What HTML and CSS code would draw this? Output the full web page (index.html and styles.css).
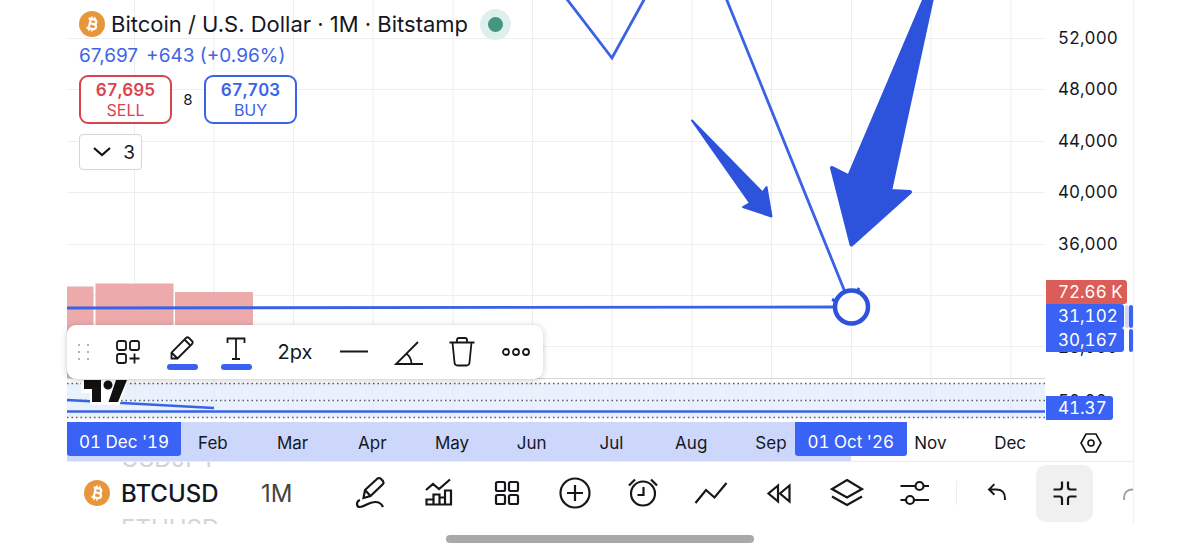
FILE: index.html
```
<!DOCTYPE html>
<html lang="en">
<head>
  <meta charset="UTF-8">
  <meta name="viewport" content="width=device-width, initial-scale=1">
  <title>BTCUSD Chart</title>
  <link rel="stylesheet" href="styles.css">
</head>
<body>
  <!-- shared icons -->
  <svg class="defs" width="0" height="0" aria-hidden="true">
    <symbol id="coin" viewBox="0 0 26 26">
      <circle cx="13" cy="13" r="13" fill="#e8963c"/>
      <g transform="rotate(13 13 13)" fill="none" stroke="#fff" stroke-width="2.2">
        <path d="M8.500 8.300h5.700c3.400 0 3.400 4.400 0 4.400h-3.400M8.500 17.700h6.200c3.800 0 3.800-5 0-5h-3.500M10.700 8.300v9.400"/>
        <path d="M11.400 5.500v3M14.400 5.500v3M11.400 17.500v3M14.400 17.500v3" stroke-width="1.500"/>
      </g>
    </symbol>
  </svg>

  <main class="app">
    <section class="chart">
      <div class="plot">
        <svg class="plot-svg" viewBox="0 0 978 421" preserveAspectRatio="xMinYMin slice">
          <rect y="383" width="978" height="35" fill="#e8f1fc"/>
          <g stroke="#e9eaec" stroke-opacity=".8">
            <path d="M67.500 0v421M147 0v421M226.500 0v421M306 0v421M386 0v421M465.500 0v421M545 0v421M625 0v421M704.500 0v421M784.500 0v421M864 0v421M944 0v421"/>
            <path d="M0 38.500h978M0 89.500h978M0 141.500h978M0 192.500h978M0 244.500h978M0 295.500h978M0 346.500h978"/>
          </g>
          <!-- volume -->
          <path d="M0 286.500h26.500V378H0zM28.500 283.500h78V378h-78zM108 292h78v86h-78z" fill="#ecabaa"/>
          <path d="M0 378.500h978" stroke="#d5d7db"/>
          <!-- oscillator pane -->
          <path d="M0 383.500h978M0 400.500h978M0 417.500h978" stroke="#5c606b" stroke-width="1.300" stroke-dasharray="1.500 3"/>
          <path d="M0 400L147 408M0 411.500H978" fill="none" stroke="#3a62e4" stroke-width="2.600"/>
          <path d="M14 375h49L52.500 405H23v-12H14z" fill="#fff"/>
          <path d="M17 380h17v22h-9v-13h-8zM49 380h11l-9 22h-9.500zM36.500 385a4.500 4.500 0 1 0 9 0a4.500 4.500 0 1 0-9 0" fill="#111"/>
          <!-- drawings -->
          <g fill="none" stroke="#3a62e4" stroke-width="2.800">
            <path d="M499-2L545 58L578-2M659-2L778 292M0 308L768 307"/>
          </g>
          <path d="M858-2L782 176.500L765 168L784.500 244.500L843 192L823 191L865-2z" fill="#2d53dc" stroke="#2d53dc" stroke-width="4" stroke-linejoin="round"/>
          <path d="M625 120.500L695.500 192.500L699.500 187L704.500 216.500L676 207L683 203z" fill="#2d53dc" stroke="#2d53dc" stroke-width="2" stroke-linejoin="round"/>
          <path d="M765 299.500l5 2M792 288l-2 4" stroke="#2d53dc" stroke-width="3"/>
          <circle cx="784.500" cy="307" r="16.500" fill="#fff" stroke="#2d53dc" stroke-width="4.500"/>
        </svg>

        <header class="legend">
          <h1 class="legend-title">
            <svg class="coin"><use href="#coin"/></svg>
            Bitcoin / U.S. Dollar · 1M · Bitstamp
            <span class="market-open"></span>
          </h1>
          <p class="legend-price"><span>67,697</span><span>+643 (+0.96%)</span></p>
          <div class="trade">
            <button class="trade-btn sell"><b>67,695</b>SELL</button>
            <span class="spread">8</span>
            <button class="trade-btn buy"><b>67,703</b>BUY</button>
          </div>
          <button class="indicators">
            <svg width="18" height="10" viewBox="0 0 18 10" fill="none" stroke="#111" stroke-width="2.200"><path d="M1 1l8 7 8-7"/></svg>
            3
          </button>
        </header>

        <div class="draw-bar">
          <svg class="grip" width="14" height="18" viewBox="0 0 14 18" fill="#b4b4b4"><path d="M1 1h2v2H1zM10 1h2v2h-2zM1 8h2v2H1zM10 8h2v2h-2zM1 15h2v2H1zM10 15h2v2h-2z"/></svg>
          <button class="draw-btn" aria-label="Templates">
            <svg width="26" height="26" viewBox="0 0 26 26"><rect x="2" y="2" width="9" height="9" rx="2"/><rect x="15" y="2" width="9" height="9" rx="2"/><rect x="2" y="15" width="9" height="9" rx="2"/><path d="M19.500 14.500v10M14.500 19.500h10"/></svg>
          </button>
          <button class="draw-btn with-color" aria-label="Line color">
            <svg width="26" height="26" viewBox="0 0 26 26"><path d="M2.500 23.500v-6L17 3q1.500-1.500 3 0l3 3q1.500 1.500 0 3L8.500 23.500zM15.500 4.500l6 6M2.500 17.500l6 6"/></svg>
          </button>
          <button class="draw-btn with-color" aria-label="Text color">
            <svg width="26" height="26" viewBox="0 0 26 26"><path d="M4.500 8V3.500h17V8M13 3.500V24M9 24h8"/></svg>
          </button>
          <button class="draw-btn line-width">2px</button>
          <button class="draw-btn" aria-label="Line style">
            <svg width="30" height="26" viewBox="0 0 30 26"><path d="M1 12.500h28" stroke-width="2"/></svg>
          </button>
          <button class="draw-btn" aria-label="Angle">
            <svg width="30" height="30" viewBox="0 0 30 30"><path d="M25 5L3 27h27M13 16.500Q18.500 20 18.500 27"/></svg>
          </button>
          <button class="draw-btn" aria-label="Remove">
            <svg width="28" height="30" viewBox="0 0 28 30"><path d="M1.500 5.500h25M4.500 5.500l2 20q.3 3 3 3h9q2.700 0 3-3l2-20M9 5.500V3q0-2 2-2h6q2 0 2 2v2.500"/></svg>
          </button>
          <button class="draw-btn" aria-label="More">
            <svg width="30" height="10" viewBox="0 0 30 10"><circle cx="5" cy="5" r="3"/><circle cx="15" cy="5" r="3"/><circle cx="25" cy="5" r="3"/></svg>
          </button>
        </div>
      </div>

      <aside class="scale">
        <div class="scale-labels">
          <span>52,000</span>
          <span>48,000</span>
          <span>44,000</span>
          <span>40,000</span>
          <span>36,000</span>
          <span>32,000</span>
          <span>28,000</span>
        </div>
        <span class="osc-label">50.00</span>
        <div class="price-tags">
          <span class="tag tag-volume">72.66 K</span>
          <span class="tag">31,102</span>
          <span class="tag">30,167</span>
        </div>
        <div class="range-marks"><i></i><i></i></div>
        <span class="tag tag-osc">41.37</span>
      </aside>
    </section>

    <div class="time-axis">
      <span class="date-tag date-start">01 Dec '19</span>
      <span>Feb</span>
      <span>Mar</span>
      <span>Apr</span>
      <span>May</span>
      <span>Jun</span>
      <span>Jul</span>
      <span>Aug</span>
      <span>Sep</span>
      <span class="date-tag">01 Oct '26</span>
      <span>Nov</span>
      <span>Dec</span>
      <button class="axis-settings" aria-label="Axis settings">
        <svg width="22" height="20" viewBox="0 0 22 20" fill="none" stroke="#111" stroke-width="1.600"><path d="M6 1h10l5 9-5 9H6l-5-9z"/><circle cx="11" cy="10" r="3"/></svg>
      </button>
    </div>

    <nav class="toolbar">
      <svg class="coin"><use href="#coin"/></svg>
      <div class="symbols">
        <button class="symbol-near">USDJPY</button>
        <button>BTCUSD</button>
        <button class="symbol-near">ETHUSD</button>
      </div>
      <button class="interval">1M</button>
      <div class="tools">
        <button class="tool" aria-label="Draw">
          <svg viewBox="0 0 34 34"><path d="M9.500 22l1.500-8L23.500 2.500q1.500-1 3 0l2.500 2.500q1 1.500 0 3L16.500 20zM11 14l5.500 6M6 24c-4 1-4 7 0 7c5 0 8-5 15-5q6 0 8 5"/></svg>
        </button>
        <button class="tool" aria-label="Indicators">
          <svg viewBox="0 0 34 34"><path d="M4 14l7-6 6 5L28 3.500M4.500 28.500v-5h7v-5h6v3h5.500v-7h6v14zM11.500 23.500v5M17.500 21.500v7M23 21.500v7"/></svg>
        </button>
        <button class="tool" aria-label="Layouts">
          <svg viewBox="0 0 34 34"><rect x="6" y="6" width="9" height="9" rx="1.500"/><rect x="19" y="6" width="9" height="9" rx="1.500"/><rect x="6" y="19" width="9" height="9" rx="1.500"/><rect x="19" y="19" width="9" height="9" rx="1.500"/></svg>
        </button>
        <button class="tool" aria-label="Add">
          <svg viewBox="0 0 34 34"><circle cx="17" cy="17" r="14.500"/><path d="M17 9v16M9 17h16"/></svg>
        </button>
        <button class="tool" aria-label="Alert">
          <svg viewBox="0 0 34 34"><circle cx="17" cy="17.500" r="12"/><path d="M17.500 11v8h-6M3 9.500l6-6M25 3.500l6 6"/></svg>
        </button>
        <button class="tool" aria-label="Trend">
          <svg viewBox="0 0 34 34"><path d="M1.500 27L12 14l8.500 7.500L32.500 7"/></svg>
        </button>
        <button class="tool" aria-label="Replay">
          <svg viewBox="0 0 34 34"><path d="M16 9.500v16L6.500 17.500zM27.500 9.500v16L18 17.500z"/></svg>
        </button>
        <button class="tool" aria-label="Object tree">
          <svg viewBox="0 0 34 34"><path d="M17 4l15 9-15 8.500L2 13zM2 20.500l15 8.500 15-8.500"/></svg>
        </button>
        <button class="tool" aria-label="Settings">
          <svg viewBox="0 0 34 34"><path d="M2.500 10h15M25.500 10H31M2.500 24H8M16 24h15"/><circle cx="21.500" cy="10" r="4"/><circle cx="12" cy="24" r="4"/></svg>
        </button>
      </div>
      <button class="tool undo" aria-label="Undo">
        <svg viewBox="0 0 34 34"><path d="M14 7L8 13l6 6M8 13h8q10 0 10 10v2"/></svg>
      </button>
      <button class="tool active" aria-label="Exit fullscreen">
        <svg viewBox="0 0 34 34"><path d="M14 5.500V11q0 2.500-2.500 2.500H5.500M20 5.500V11q0 2.500 2.500 2.500h6M5.500 20.500h6q2.500 0 2.500 2.500v6M28.500 20.500h-6q-2.500 0-2.500 2.500v6"/></svg>
      </button>
      <button class="tool redo" aria-label="Redo">
        <svg viewBox="0 0 34 34"><path d="M20 7l6 6-6 6M26 13h-8Q8 13 8 23v2"/></svg>
      </button>
    </nav>
  </main>
  <div class="home-indicator"></div>
</body>
</html>
```
FILE: styles.css
```
* { box-sizing: border-box; }
body { margin: 0; background: #fff; color: #15171f; font-family: Inter, "Liberation Sans", sans-serif; font-size: 17px; overflow: hidden; }
button { padding: 0; border: 0; background: none; color: inherit; font: inherit; cursor: pointer; }
svg { display: block; }
.defs { position: absolute; }
.app { margin: 0 66px 0 67px; border-right: 1px solid #f1f1f3; }
.coin { width: 26px; height: 26px; flex: none; }

/* chart */
.chart { display: grid; grid-template-columns: minmax(0, 1fr) 88px; height: 421px; }
.plot { position: relative; }
.plot-svg { width: 100%; height: 100%; }

.legend { position: absolute; top: 8px; left: 12px; }
.legend-title { display: flex; align-items: center; gap: 6px; margin: 0; height: 32px; font-size: 22px; font-weight: 400; white-space: nowrap; }
.market-open { width: 31px; height: 31px; margin-left: 6px; border: 8px solid #dfefec; border-radius: 50%; background: #43967f; }
.legend-price { display: flex; gap: 8px; margin: 4px 0 7px; font-size: 19px; line-height: 24px; color: #3f65e5; }
.trade { display: flex; align-items: center; }
.trade-btn { width: 93px; height: 49px; border: 2px solid; border-radius: 9px; background: #fff; font-size: 16px; line-height: 20px; }
.trade-btn b { display: block; font-size: 17px; font-weight: 600; font-variant-numeric: tabular-nums; }
.sell { color: #d9434d; }
.buy { color: #3a62e8; }
.spread { width: 32px; text-align: center; font-size: 15px; }
.indicators { display: flex; align-items: center; justify-content: flex-end; gap: 12px; width: 63px; height: 36px; margin-top: 10px; padding-right: 6px; border: 1px solid #d6d6d6; border-radius: 4px; background: #fff; font-size: 19px; }

/* floating drawing toolbar */
.draw-bar { position: absolute; top: 325px; left: 0; display: flex; align-items: center; height: 54px; border-radius: 9px; background: #fff; box-shadow: 0 1px 6px rgba(0, 0, 0, .22); }
.grip { margin: 0 10px; }
.draw-btn { display: flex; flex-direction: column; align-items: center; justify-content: center; width: 54px; height: 54px; }
.draw-btn svg { fill: none; stroke: #15171a; stroke-width: 1.8; }
.with-color::after { content: ""; width: 31px; height: 6px; margin-top: 3px; border-radius: 3px; background: #3a62f2; }
.line-width { width: 64px; font-size: 20px; }

/* price scale */
.scale { position: relative; font-variant-numeric: tabular-nums; }
.scale-labels { display: grid; grid-template-rows: repeat(7, 1fr); height: 361px; margin-top: 12px; padding-left: 13px; align-items: center; }
.price-tags { position: absolute; top: 280px; left: 1px; }
.tag { display: block; width: 78px; height: 24px; padding-left: 12px; border-radius: 0 3px 3px 0; background: #3a62f4; color: #fff; line-height: 24px; white-space: nowrap; }
.tag-volume { width: 81px; background: #dc5d57; }
.osc-label { position: absolute; top: 391px; left: 13px; }
.tag-osc { position: absolute; top: 396px; left: 1px; width: 67px; }
.range-marks { position: absolute; top: 305px; right: 0; display: grid; gap: 1px; }
.range-marks i { width: 4px; height: 23px; border-radius: 3px; background: #3a62f4; }
.range-marks i:first-child { box-shadow: -4px 0 #cdd8fb; }

/* time axis */
.time-axis { display: grid; grid-template-columns: 106px repeat(11, minmax(0, 1fr)) 83px; align-items: center; height: 41px; padding-top: 3px; border-bottom: 1px solid #ededf0; background: linear-gradient(to right, #ccd7fb 73.5%, #fff 73.5%) 0 1px no-repeat; text-align: center; }
.date-tag { align-self: start; justify-self: center; width: 112px; height: 34px; margin-top: -2px; border-radius: 0 0 3px 3px; background: #3a62f4; color: #fff; font-variant-numeric: tabular-nums; line-height: 41px; white-space: nowrap; }
.date-start { justify-self: start; width: 114px; }
.axis-settings { justify-self: center; }

/* bottom toolbar */
.toolbar { display: flex; align-items: center; height: 62px; padding-left: 17px; overflow: hidden; }
.symbols { display: flex; flex-direction: column; width: 140px; padding-left: 11px; font-size: 24px; line-height: 35px; font-weight: 500; }
.symbols button { text-align: left; }
.symbols .symbol-near { color: #d4d4d4; font-weight: 400; }
.interval { width: 87px; padding-left: 11px; text-align: left; font-size: 24px; color: #444; }
.tools { display: flex; flex: 1; background: linear-gradient(#ededf0, #ededf0) right center / 1px 24px no-repeat; }
.tool { display: grid; place-items: center; flex: none; width: 68px; height: 34px; }
.tool svg { width: 34px; height: 34px; fill: none; stroke: #15171a; stroke-width: 2.2; }
.undo { width: 79px; }
.undo svg, .redo svg { width: 30px; height: 30px; }
.active { width: 57px; height: 57px; border-radius: 10px; background: #f0f0f0; }
.redo { width: 40px; padding-left: 24px; justify-items: start; overflow: hidden; opacity: .4; }
.home-indicator { width: 308px; height: 8px; margin: 11px auto 0; border-radius: 4px; background: #a9a9a9; }
```
